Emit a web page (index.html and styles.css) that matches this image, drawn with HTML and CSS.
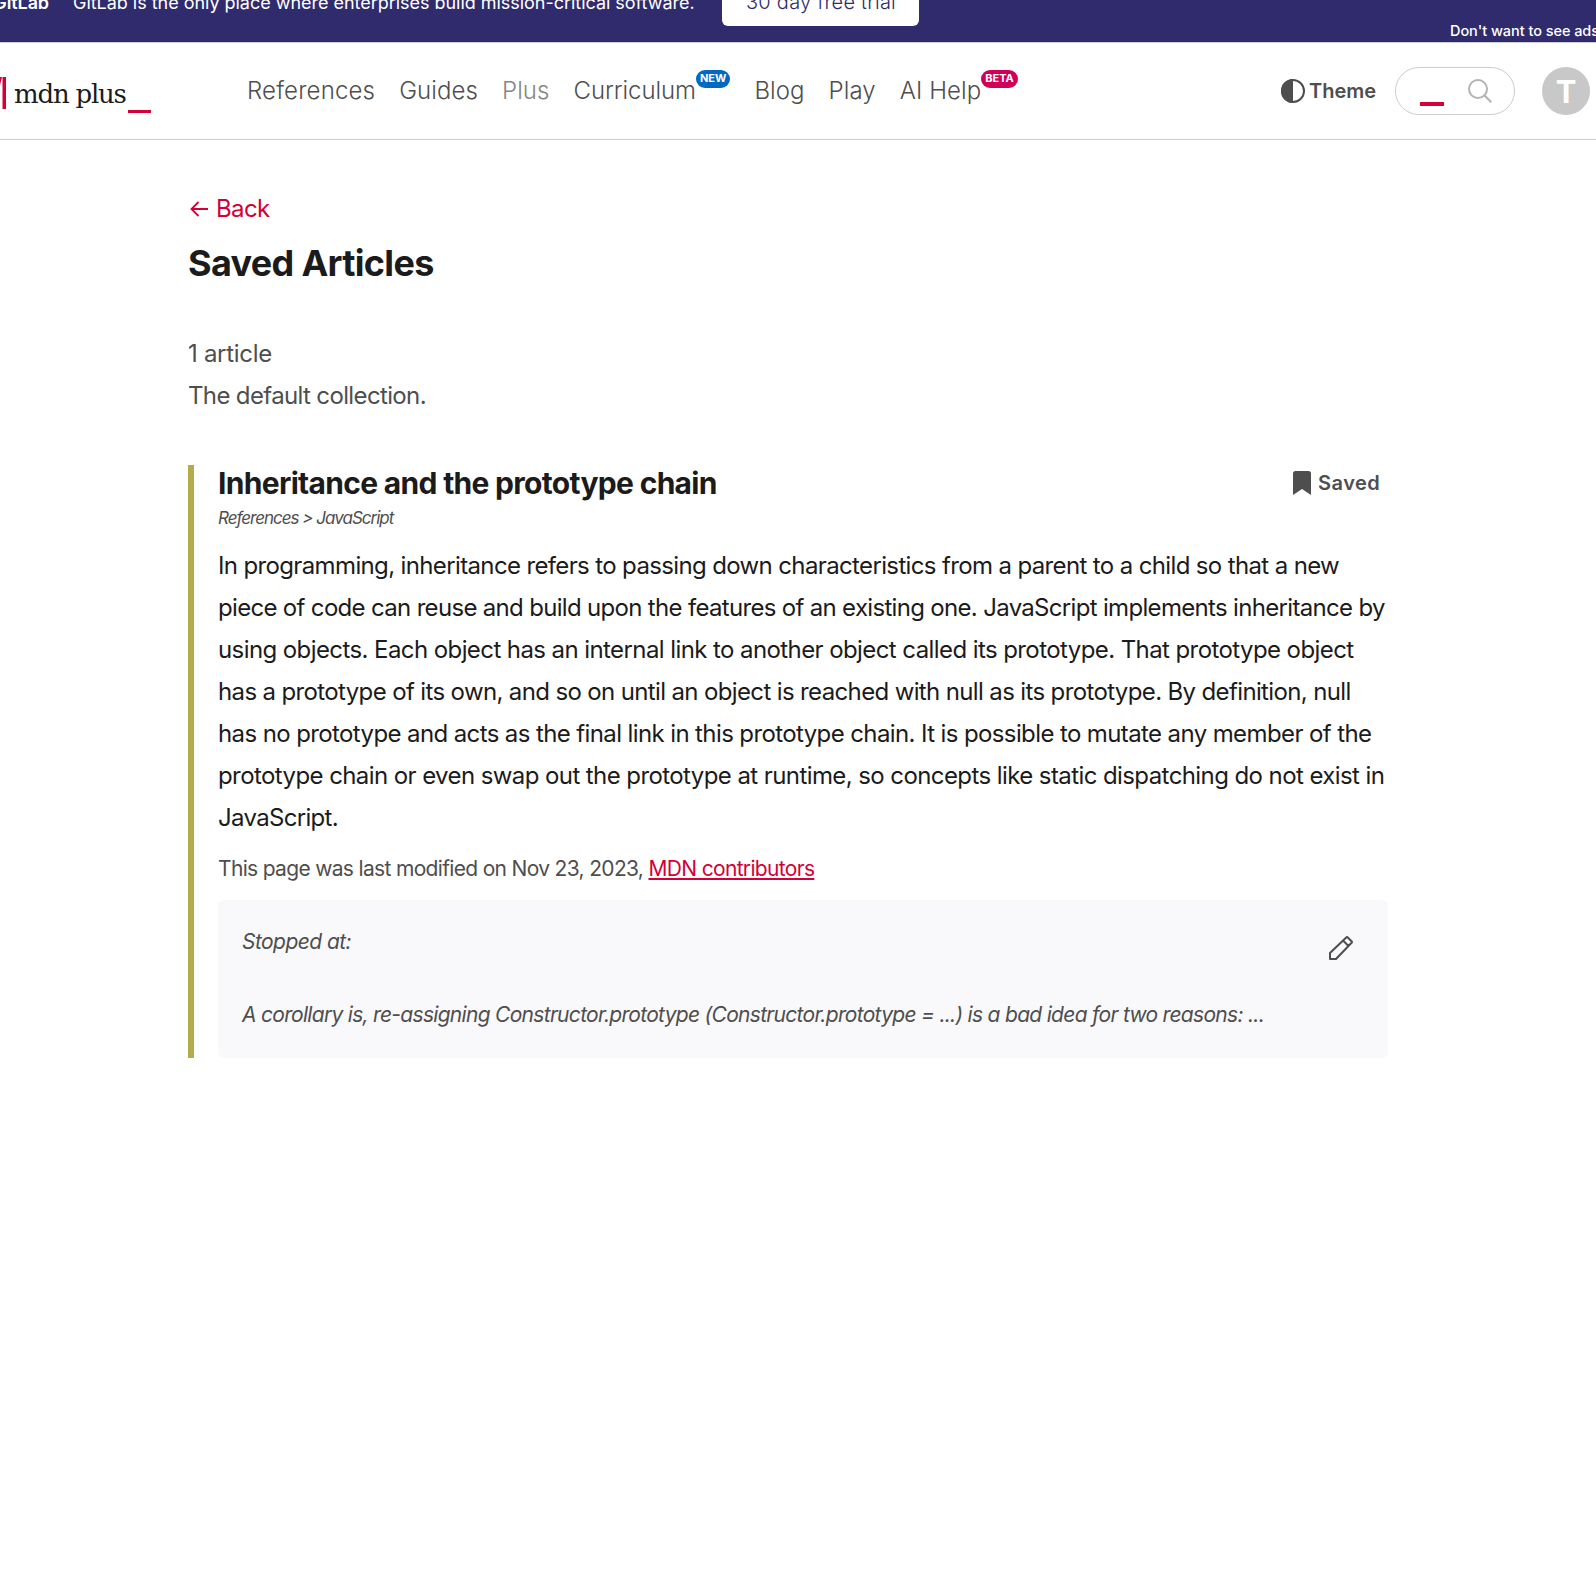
FILE: index.html
```html
<!DOCTYPE html>
<html lang="en">
<head>
<meta charset="utf-8">
<title>Saved Articles | MDN Plus</title>
<link rel="stylesheet" href="styles.css">
</head>
<body>
<aside class="banner">
  <strong class="banner-brand">GitLab</strong>
  <span class="banner-text">GitLab is the only place where enterprises build mission-critical software.</span>
  <a class="banner-button">30 day free trial</a>
  <a class="banner-optout">Don't want to see ads</a>
</aside>
<header class="header">
  <a class="logo">
    <svg class="logo-mark" width="6" height="32" viewBox="0 0 6 32"><path d="M2.500 0H6v32H2.500z"/><path d="M0 0h2L0 8z"/></svg>
    <span class="logo-text">mdn plus</span>
    <span class="logo-cursor"></span>
  </a>
  <nav class="nav">
    <a class="nav-references">References</a>
    <a class="nav-guides">Guides</a>
    <a class="nav-plus">Plus</a>
    <a class="nav-curriculum">Curriculum<sup class="badge badge-new">NEW</sup></a>
    <a class="nav-blog">Blog</a>
    <a class="nav-play">Play</a>
    <a class="nav-help">AI Help<sup class="badge badge-beta">BETA</sup></a>
  </nav>
  <div class="theme">
    <svg width="24" height="24" viewBox="0 0 24 24"><circle cx="12" cy="12" r="11" fill="none" stroke="#4e4e4e" stroke-width="2"/><path d="M12 0a12 12 0 0 0 0 24z" fill="#4e4e4e"/></svg>
    <span>Theme</span>
  </div>
  <div class="search">
    <span class="search-cursor"></span>
    <svg width="24" height="24" viewBox="0 0 24 24" fill="none" stroke="#b3b3b3" stroke-width="2"><circle cx="10" cy="10" r="9"/><path d="M16.3 16.3l7 7"/></svg>
  </div>
  <div class="avatar">T</div>
</header>
<main class="main">
  <a class="back"><svg width="19" height="20" viewBox="0 0 19 20" fill="none" stroke="#d30038" stroke-width="1.8"><path d="M18 10H1.500M8.500 3L1.500 10l7 7"/></svg><span>Back</span></a>
  <h1>Saved Articles</h1>
  <div class="summary"><p class="count">1 article</p><p>The default collection.</p></div>
  <article class="item">
    <div class="item-head">
      <h2>Inheritance and the prototype chain</h2>
      <div class="saved"><svg width="18" height="24" viewBox="0 0 18 24"><path d="M0 24V2.5Q0 0 2.5 0h13Q18 0 18 2.5V24l-9-6z" fill="#4e4e4e"/></svg><span>Saved</span></div>
    </div>
    <p class="crumbs">References &gt; JavaScript</p>
    <p class="description">
      <span class="line">In programming, inheritance refers to passing down characteristics from a parent to a child so that a new</span>
      <span class="line line-tight">piece of code can reuse and build upon the features of an existing one. JavaScript implements inheritance by</span>
      <span class="line line-loose">using objects. Each object has an internal link to another object called its prototype. That prototype object</span>
      <span class="line">has a prototype of its own, and so on until an object is reached with null as its prototype. By definition, null</span>
      <span class="line line-open">has no prototype and acts as the final link in this prototype chain. It is possible to mutate any member of the</span>
      <span class="line line-loose">prototype chain or even swap out the prototype at runtime, so concepts like static dispatching do not exist in</span>
      <span class="line line-tight">JavaScript.</span>
    </p>
    <p class="modified">This page was last modified on Nov 23, 2023, <a class="contributors">MDN contributors</a></p>
    <div class="note">
      <div class="note-text"><p class="note-label">Stopped at:</p><p>A corollary is, re-assigning Constructor.prototype (Constructor.prototype = ...) is a bad idea for two reasons: ...</p></div>
      <svg class="note-edit" width="24" height="24" viewBox="0 0 24 24" fill="none" stroke="#4e4e4e" stroke-width="2" stroke-linejoin="round"><path d="M1 23v-6L17.5 1.2Q18 .8 18.5 1.2L22.8 5.5Q23.2 6 22.8 6.500L7 23zM14 4.500L19.500 10"/></svg>
    </div>
  </article>
</main>
</body>
</html>
```
FILE: styles.css
```css
* { box-sizing: border-box; }
body { margin: 0; background: #fff; color: #1b1b1b; font-family: Inter, sans-serif; font-size: 24px; overflow: hidden; }
p, h1, h2 { margin: 0; }
svg { display: block; flex: none; }

.banner { height: 42px; background: #302b6d; color: #fff; display: flex; align-items: flex-end; overflow: hidden; white-space: nowrap; font-size: 18px; line-height: 24px; }
.banner-brand { width: 73px; display: flex; flex: none; justify-content: flex-end; padding-right: 24px; margin-bottom: 27px; font-weight: 600; letter-spacing: -.1px; }
.banner-text { width: 649px; flex: none; margin-bottom: 27px; letter-spacing: -.03px; }
.banner-button { width: 197px; height: 48px; flex: none; margin-bottom: 16px; padding: 12px 0 0 24px; border-radius: 6px; background: #fff; color: #302b6d; font-size: 20px; font-weight: 300; letter-spacing: .25px; }
.banner-optout { margin-left: 531px; font-size: 14.5px; font-weight: 500; line-height: 20px; margin-bottom: 1px; letter-spacing: -.05px; }

.header { height: 98px; border-top: 1px solid #cdcdcd; border-bottom: 1px solid #cdcdcd; display: flex; align-items: center; white-space: nowrap; color: #4e4e4e; }
.logo { width: 247px; height: 48px; flex: none; display: flex; align-items: flex-start; padding-top: 10px; }
.logo-mark { fill: #d30038; }
.logo-text { width: 122px; flex: none; padding: 1px 0 0 8px; color: #1b1b1b; font: 26px/32px "DejaVu Serif", serif; letter-spacing: -1.2px; }
.logo-cursor { width: 23px; height: 3px; margin-top: 33px; background: #d30038; }
.nav { display: flex; width: 1034px; flex: none; gap: 24px; font-weight: 330; line-height: 36px; letter-spacing: .08px; }
.nav a { display: flex; }
.nav-references { letter-spacing: .18px; }
.nav-plus { color: #858585; }
.nav-curriculum { letter-spacing: -.08px; }
.badge { height: 18px; margin: -3px 0 0 0; padding: 0 4px; border-radius: 9px; color: #fff; font-size: 11px; line-height: 16px; font-weight: 700; letter-spacing: 0; }
.badge-new { background: #0069c2; }
.badge-beta { background: #d00058; }
.theme { width: 114px; flex: none; display: flex; align-items: center; gap: 4px; font-size: 20px; font-weight: 580; }
.search { width: 120px; height: 48px; flex: none; border: 1px solid #cdcdcd; border-radius: 24px; display: flex; align-items: center; padding: 0 22px 0 24px; justify-content: space-between; }
.search-cursor { width: 24px; height: 4px; margin-top: 26px; background: #d30038; }
.avatar { width: 48px; height: 48px; flex: none; margin-left: 27px; border-radius: 50%; background: #c8c8c8; color: #fff; display: flex; align-items: center; justify-content: center; font-size: 31px; font-weight: 700; }

.main { width: 1200px; margin-left: 188px; padding-top: 47px; letter-spacing: -.64px; }
.back { display: flex; align-items: center; gap: 7px; height: 42px; padding-left: 2px; color: #d30038; }
.back svg { margin-top: 2px; }
h1 { margin-top: 13px; font-size: 36px; line-height: 43px; font-weight: 700; letter-spacing: -.68px; }
.summary { margin-top: 48px; color: #4e4e4e; line-height: 42px; }
.count { letter-spacing: -.3px; }
.item { margin-top: 48px; padding-left: 24px; border-left: 6px solid #b4ac4a; }
.item-head { display: flex; justify-content: space-between; height: 36px; }
h2 { font-size: 30px; line-height: 36px; font-weight: 700; letter-spacing: -.69px; white-space: nowrap; }
.saved { width: 95px; display: flex; align-items: center; gap: 7px; color: #4e4e4e; font-size: 20px; font-weight: 580; letter-spacing: .5px; }
.crumbs { color: #4e4e4e; font-size: 17px; font-style: italic; line-height: 34px; letter-spacing: -1px; }
.description { margin-top: 10px; line-height: 42px; }
.line { display: block; white-space: nowrap; letter-spacing: -.635px; }
.line-tight { letter-spacing: -.68px; }
.line-open { letter-spacing: -.61px; }
.line-loose { letter-spacing: -.585px; }
.modified { margin-top: 12px; margin-bottom: 13px; font-size: 21px; line-height: 36px; color: #4e4e4e; letter-spacing: -.67px; }
.contributors { color: #d30038; text-decoration: underline; }
.note { height: 158px; border-radius: 6px; background: #f9f9fb; color: #4e4e4e; display: flex; justify-content: space-between; padding: 23px 35px 0 24px; font-size: 21px; font-style: italic; line-height: 37px; letter-spacing: -.7px; }
.note-text { display: flex; flex-direction: column; gap: 36px; }
.note-label { letter-spacing: -.55px; }
.note-edit { margin-top: 13px; }
```
